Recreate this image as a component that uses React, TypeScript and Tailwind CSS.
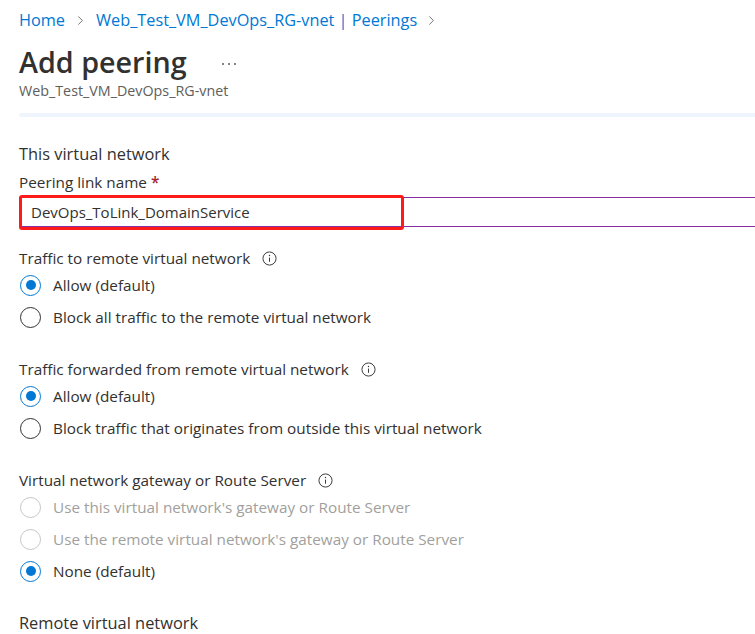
import { ChevronRight } from "lucide-react";

type Option = { label: string; checked?: boolean; disabled?: boolean };

function InfoIcon() {
  return (
    <svg width="15" height="15" viewBox="0 0 16 16" className="ml-[12px] shrink-0 text-[#323130]">
      <circle cx="8" cy="8" r="7" fill="none" stroke="currentColor" strokeWidth="1" />
      <line x1="8" y1="7" x2="8" y2="11.5" stroke="currentColor" strokeWidth="1" />
      <circle cx="8" cy="4.8" r="0.7" fill="currentColor" />
    </svg>
  );
}

function Radio({ label, checked, disabled }: Option) {
  return (
    <div className="flex h-8 items-center">
      <span
        className={
          checked
            ? "flex h-[21px] w-[21px] items-center justify-center rounded-full border border-[#0078d4]"
            : disabled
              ? "h-[21px] w-[21px] rounded-full border border-[#c8c6c4]"
              : "h-[21px] w-[21px] rounded-full border border-[#323130]"
        }
      >
        {checked ? <span className="h-[10px] w-[10px] rounded-full bg-[#0078d4]" /> : null}
      </span>
      <span className={disabled ? "ml-[12px] text-[#a19f9d]" : "ml-[12px] text-[#323130]"}>{label}</span>
    </div>
  );
}

function RadioGroup({ title, options }: { title: string; options: Option[] }) {
  return (
    <div>
      <div className="flex h-[22px] items-center text-[#323130]">
        {title}
        <InfoIcon />
      </div>
      <div className="ml-px">
        {options.map((option) => (
          <Radio key={option.label} {...option} />
        ))}
      </div>
    </div>
  );
}

export default function App() {
  return (
    <main
      className="h-[634px] w-[755px] overflow-hidden bg-white text-[15.3px] text-[#323130]"
      style={{ fontFamily: '"Segoe UI", "Open Sans", sans-serif' }}
    >
      <div className="pl-[19px]">
        <nav className="mt-[10px] flex h-[20px] items-center text-[16.3px] text-[#0078d4]">
          <span>Home</span>
          <ChevronRight size={15} strokeWidth={1.4} className="mx-[8px] text-[#605e5c]" />
          <span>Web_Test_VM_DevOps_RG-vnet | Peerings</span>
          <ChevronRight size={15} strokeWidth={1.4} className="mx-[7px] text-[#605e5c]" />
        </nav>

        <div className="mt-[14px] flex h-[36px] items-center">
          <h1 className="text-[28.7px] font-semibold leading-[36px] text-[#323130]">Add peering</h1>
          <span className="ml-[35px] mt-[4px] flex gap-[4px]">
            <span className="h-[2px] w-[2px] rounded-full bg-[#605e5c]" />
            <span className="h-[2px] w-[2px] rounded-full bg-[#605e5c]" />
            <span className="h-[2px] w-[2px] rounded-full bg-[#605e5c]" />
          </span>
        </div>
        <p className="mt-[2px] text-[14.3px] leading-[18px] text-[#605e5c]">Web_Test_VM_DevOps_RG-vnet</p>

        <div className="mt-[13px] h-[4px] rounded-l-sm bg-[#eef5fc]" />

        <h2 className="mt-[26px] text-[16.4px] leading-[22px]">This virtual network</h2>

        <label className="mt-[7px] block leading-[20px]">
          Peering link name <span className="font-semibold text-[#a4262c]">*</span>
        </label>

        <div className="relative mt-[5px]">
          <div className="flex h-[30px] items-center border-y border-[#8a2da5] pl-[12px] text-[15px]">
            DevOps_ToLink_DomainService
          </div>
          <div className="pointer-events-none absolute left-0 top-[-2px] h-[35px] w-[385px] rounded-[3px] border-[3px] border-[#ff1a1a]" />
        </div>

        <div className="mt-[20px]">
          <RadioGroup
            title="Traffic to remote virtual network"
            options={[{ label: "Allow (default)", checked: true }, { label: "Block all traffic to the remote virtual network" }]}
          />
        </div>

        <div className="mt-[25px]">
          <RadioGroup
            title="Traffic forwarded from remote virtual network"
            options={[
              { label: "Allow (default)", checked: true },
              { label: "Block traffic that originates from outside this virtual network" },
            ]}
          />
        </div>

        <div className="mt-[25px]">
          <RadioGroup
            title="Virtual network gateway or Route Server"
            options={[
              { label: "Use this virtual network's gateway or Route Server", disabled: true },
              { label: "Use the remote virtual network's gateway or Route Server", disabled: true },
              { label: "None (default)", checked: true },
            ]}
          />
        </div>

        <h2 className="mt-[25px] text-[16.4px] leading-[22px]">Remote virtual network</h2>
      </div>
    </main>
  );
}
